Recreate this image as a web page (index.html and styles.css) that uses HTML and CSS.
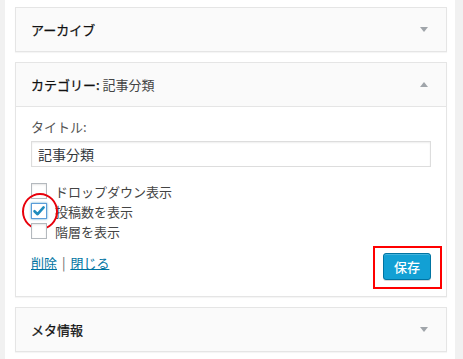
FILE: index.html
```html
<!DOCTYPE html>
<html lang="ja">
<head>
    <meta charset="utf-8">
    <title>ウィジェット</title>
    <link rel="stylesheet" href="styles.css">
</head>
<body>
    <div class="sidebar">
        <!-- アーカイブ -->
        <div class="widget">
            <div class="widget-top">
                <h3 class="widget-title">アーカイブ</h3>
                <span class="arrow arrow-down"></span>
            </div>
        </div>

        <!-- カテゴリー (open) -->
        <div class="widget">
            <div class="widget-top">
                <h3 class="widget-title">カテゴリー: <span class="in-title">記事分類</span></h3>
                <span class="arrow arrow-up"></span>
            </div>
            <div class="widget-inside">
                <label class="field-label" for="title">タイトル:</label>
                <input class="field-input" type="text" id="title" value="記事分類">
                <div class="options">
                    <label class="option"><span class="checkbox"></span>ドロップダウン表示</label>
                    <label class="option"><span class="checkbox checked marked">
                        <svg width="14" height="14" viewBox="0 0 14 14"><path d="M2.5 7.2 L5.6 10.2 L11.6 3.4" fill="none" stroke="#1e8cbe" stroke-width="2.6" stroke-linecap="round" stroke-linejoin="round"/></svg>
                    </span>投稿数を表示</label>
                    <label class="option"><span class="checkbox"></span>階層を表示</label>
                </div>
                <div class="widget-control">
                    <div class="links">
                        <a href="#">削除</a> <span class="sep">|</span> <a href="#">閉じる</a>
                    </div>
                    <span class="save-wrap">
                        <button class="button-primary">保存</button>
                    </span>
                </div>
            </div>
        </div>

        <!-- メタ情報 -->
        <div class="widget">
            <div class="widget-top">
                <h3 class="widget-title">メタ情報</h3>
                <span class="arrow arrow-down"></span>
            </div>
        </div>
    </div>
</body>
</html>
```

FILE: styles.css
```css
/* page */
body {
    margin: 0;
    background-color: #f1f1f1;
    font-family: "Noto Sans CJK JP", sans-serif;
    font-size: 13px;
    color: #444;
}

.sidebar {
    margin: 0 8px 0 5px;
    padding: 7px 8px 10px 10px;
    background-color: #fff;
    min-height: 342px;
}

/* widgets */
.widget {
    border: 1px solid #e5e5e5;
    background-color: #fff;
    margin-bottom: 10px;
    box-shadow: 0 1px 1px rgba(0, 0, 0, 0.04);
}

.widget-top {
    display: flex;
    align-items: center;
    justify-content: space-between;
    height: 43px;
    padding: 0 18px 0 15px;
    background-color: #fafafa;
}

.widget-title {
    margin: 0;
    font-size: 13px;
    font-weight: 400;
    color: #111;
    -webkit-text-stroke: 0.25px #111;
}

.in-title {
    color: #444;
    -webkit-text-stroke: 0;
}

.arrow {
    width: 0;
    height: 0;
    border-left: 4px solid transparent;
    border-right: 4px solid transparent;
}

.arrow-down {
    border-top: 5px solid #a0a5aa;
}

.arrow-up {
    border-bottom: 5px solid #a0a5aa;
}

.widget-inside {
    border-top: 1px solid #e5e5e5;
    padding: 10px 15px 16px 15px;
}

/* form */
.field-label {
    display: block;
    line-height: 19px;
    color: #555;
    margin-bottom: 5px;
}

.field-input {
    display: block;
    width: 100%;
    height: 26px;
    box-sizing: border-box;
    padding: 0 6px;
    border: 1px solid #ddd;
    box-shadow: inset 0 1px 2px rgba(0, 0, 0, 0.07);
    font-family: inherit;
    font-size: 14px;
    color: #32373c;
    outline: none;
}

.options {
    margin-top: 14px;
}

.option {
    display: flex;
    align-items: center;
    height: 20px;
    color: #444;
}

.checkbox {
    position: relative;
    display: inline-flex;
    align-items: center;
    justify-content: center;
    width: 16px;
    height: 16px;
    box-sizing: border-box;
    margin-right: 8px;
    border: 1px solid #b4b9be;
    background-color: #fff;
    box-shadow: inset 0 1px 2px rgba(0, 0, 0, 0.1);
}

.checkbox.checked {
    border-color: #5b9dd9;
    box-shadow: 0 0 2px rgba(30, 140, 190, 0.8);
}

/* red annotation circle */
.checkbox.marked::after {
    content: "";
    position: absolute;
    left: -10px;
    top: -11px;
    width: 32px;
    height: 33px;
    border: 2px solid #e8000b;
    border-radius: 50%;
}

.widget-control {
    display: flex;
    justify-content: space-between;
    align-items: flex-start;
    margin-top: 12px;
}

.links {
    line-height: 19px;
}

.links a {
    color: #0074a2;
    text-decoration: underline;
}

.sep {
    color: #666;
    margin: 0 2px;
}

.save-wrap {
    position: relative;
    display: inline-block;
}

/* red annotation box */
.save-wrap::after {
    content: "";
    position: absolute;
    left: -10px;
    right: -11px;
    top: -7px;
    bottom: -9px;
    border: 2px solid #f00;
}

.button-primary {
    display: block;
    width: 48px;
    height: 27px;
    padding: 0;
    background-color: #12a0d4;
    border: 1px solid #0074a2;
    border-radius: 3px;
    box-shadow: inset 0 1px 0 rgba(120, 200, 230, 0.5), 0 1px 0 rgba(0, 0, 0, 0.15);
    color: #fff;
    font-family: inherit;
    font-size: 13px;
    font-weight: 500;
    cursor: pointer;
}
```
